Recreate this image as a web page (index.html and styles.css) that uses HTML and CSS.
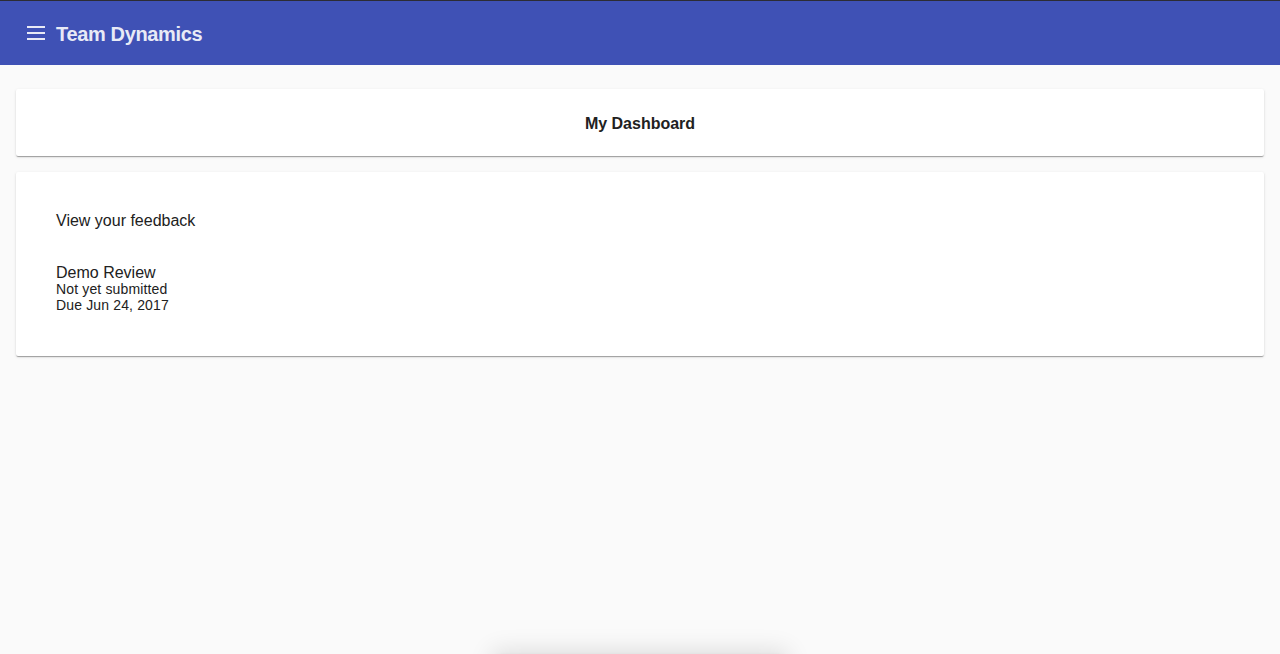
FILE: index.html
```html
<!DOCTYPE html>
<html lang="en">
<head>
<meta charset="utf-8">
<title>Team Dynamics</title>
<link rel="stylesheet" href="styles.css">
</head>
<body>
<header class="toolbar">
  <button class="menu-btn" aria-label="Menu">
    <svg width="18" height="14" viewBox="0 0 18 14"><rect x="0" y="0" width="18" height="2" fill="#e8eaf6"/><rect x="0" y="6" width="18" height="2" fill="#e8eaf6"/><rect x="0" y="12" width="18" height="2" fill="#e8eaf6"/></svg>
  </button>
  <span class="app-title">Team Dynamics</span>
</header>
<main class="content">
  <section class="card card-title">
    <h1 class="page-title">My Dashboard</h1>
  </section>
  <section class="card card-body">
    <h2 class="section-heading">View your feedback</h2>
    <div class="review">
      <div class="review-name">Demo Review</div>
      <div class="review-meta">Not yet submitted</div>
      <div class="review-meta">Due Jun 24, 2017</div>
    </div>
  </section>
</main>
<div class="snackbar"></div>
</body>
</html>
```

FILE: styles.css
```css
html, body {
  margin: 0;
  padding: 0;
  height: 100%;
}
body {
  background: #fafafa;
  font-family: "Liberation Sans", Arial, sans-serif;
  color: #212121;
  overflow: hidden;
}
.toolbar {
  display: flex;
  align-items: center;
  height: 64px;
  background: #3f51b5;
  border-top: 1px solid #2c2c34;
  padding: 0 16px 0 27px;
}
.menu-btn {
  display: flex;
  align-items: center;
  background: none;
  border: 0;
  padding: 0;
  margin: 0 11px 0 0;
  cursor: pointer;
}
.app-title {
  color: #e8eaf6;
  font-size: 20px;
  font-weight: bold;
  letter-spacing: -0.35px;
  padding-top: 2px;
}
.content {
  display: flex;
  flex-direction: column;
  gap: 16px;
  padding: 24px 16px;
}
.card {
  background: #fff;
  border-radius: 2px;
  box-shadow: 0 2px 1px -1px rgba(0,0,0,.2), 0 1px 1px 0 rgba(0,0,0,.14), 0 1px 3px 0 rgba(0,0,0,.12);
}
.card-title {
  padding: 25px 16px 23px;
  text-align: center;
}
.page-title {
  margin: 0;
  font-size: 16px;
  line-height: 19px;
  font-weight: bold;
}
.card-body {
  padding: 40px 40px 43px;
}
.section-heading {
  margin: 0 0 35px;
  font-size: 16px;
  font-weight: normal;
  line-height: 17px;
}
.review-name {
  font-size: 16px;
  line-height: 17px;
}
.review-meta {
  font-size: 14px;
  line-height: 16px;
  letter-spacing: 0.15px;
}
.snackbar {
  position: fixed;
  left: 50%;
  bottom: -48px;
  width: 288px;
  height: 48px;
  margin-left: -144px;
  background: #fafafa;
  box-shadow: 0 3px 5px -1px rgba(0,0,0,.2), 0 6px 10px 0 rgba(0,0,0,.14), 0 1px 24px 4px rgba(0,0,0,.12);
}
```
